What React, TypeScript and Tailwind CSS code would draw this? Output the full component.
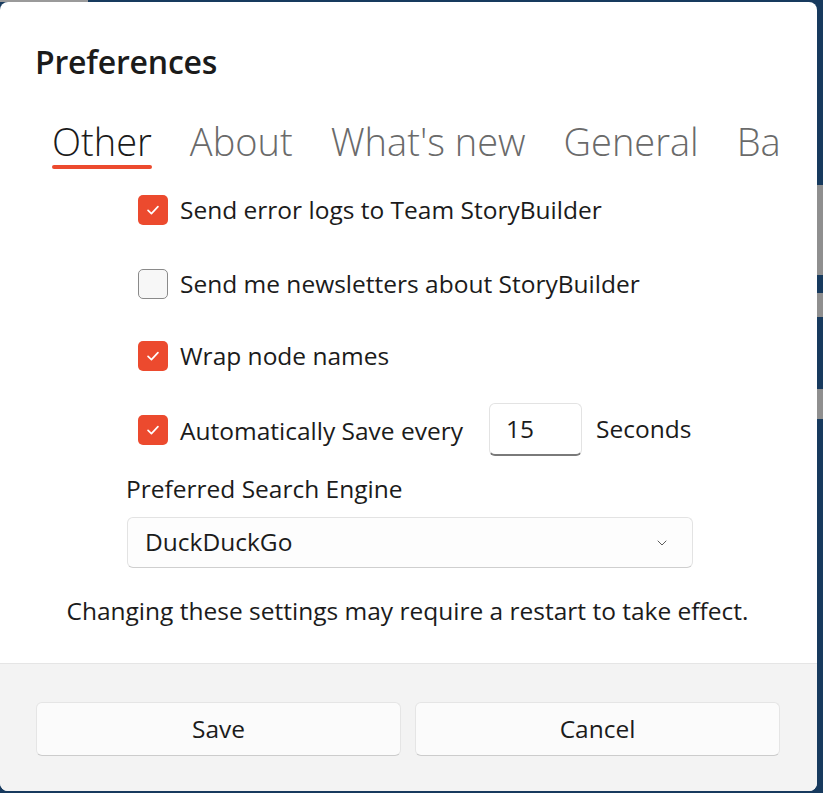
import { ChevronDown } from "lucide-react";

const font = { fontFamily: '"Open Sans", "Noto Sans", sans-serif' };

function Check({ checked }: { checked: boolean }) {
  if (!checked) {
    return <div className="w-[30px] h-[30px] rounded-[5px] border-[1.5px] border-[#8a8a8a] bg-[#f7f7f7] shrink-0" />;
  }
  return (
    <div className="w-[30px] h-[30px] rounded-[5px] bg-[#ec4a2e] flex items-center justify-center shrink-0">
      <svg width="18" height="18" viewBox="0 0 16 16" fill="none">
        <path d="M3.6 8.4 6.6 11.2 12.4 5" stroke="white" strokeWidth="1.5" strokeLinecap="round" strokeLinejoin="round" />
      </svg>
    </div>
  );
}

const tabs = ["Other", "About", "What's new", "General", "Backup"];

export default function App() {
  return (
    <div className="w-[823px] h-[793px] bg-[#173a5e] flex flex-col overflow-hidden" style={font}>
      <div className="h-[2px] flex">
        <div className="w-[88px] bg-[#9a9a9a]" />
      </div>
      <div className="flex flex-1">
        <div className="w-[817px] h-[789px] bg-white rounded-lg flex flex-col overflow-hidden">
          <div className="flex-1 flex flex-col">
            <h1 className="ml-[35px] mt-[40px] text-[32px] leading-[40px] font-semibold text-[#1b1b1b] tracking-[-0.2px]">
              Preferences
            </h1>
            <div className="mt-[31px] ml-[36px] w-[745px] overflow-hidden flex gap-[38px] whitespace-nowrap">
              {tabs.map((t, i) => (
                <div key={t} className="flex flex-col items-center shrink-0 first:ml-[16px]">
                  <span
                    className={`text-[38px] leading-[56px] font-light ${i === 0 ? "text-[#1a1a1a]" : "text-[#6a6a6a]"}`}
                  >
                    {t}
                  </span>
                  <div className={`-mt-[4px] h-[4px] w-full rounded-full ${i === 0 ? "bg-[#ec4a2e]" : "bg-transparent"}`} />
                </div>
              ))}
            </div>

            <div className="ml-[138px] mt-[26px] flex flex-col text-[24.5px] text-[#1b1b1b]">
              <div className="flex items-center gap-[12px] h-[30px]">
                <Check checked />
                <span>Send error logs to Team StoryBuilder</span>
              </div>
              <div className="flex items-center gap-[12px] h-[30px] mt-[44px]">
                <Check checked={false} />
                <span>Send me newsletters about StoryBuilder</span>
              </div>
              <div className="flex items-center gap-[12px] h-[30px] mt-[42px]">
                <Check checked />
                <span>Wrap node names</span>
              </div>
              <div className="flex items-center h-[53px] mt-[32px]">
                <Check checked />
                <span className="ml-[12px] mt-[4px]">Automatically Save every</span>
                <div className="ml-[26px] w-[93px] h-[53px] rounded-[6px] border border-[#e3e3e3] border-b-2 border-b-[#7a7a7a] bg-white flex items-center pl-[16px]">
                  15
                </div>
                <span className="ml-[14px]">Seconds</span>
              </div>
            </div>

            <div className="ml-[126px] mt-[17px] text-[24.5px] leading-[32px] text-[#1b1b1b]">Preferred Search Engine</div>
            <div className="ml-[127px] mt-[12px] w-[566px] h-[51px] rounded-[6px] border border-[#e3e3e3] border-b-[#cfcfcf] bg-[#fdfdfd] flex items-center justify-between pl-[17px] pr-[22px] text-[24.5px] text-[#1b1b1b]">
              <span>DuckDuckGo</span>
              <ChevronDown className="w-[16px] h-[16px] text-[#5c5c5c]" strokeWidth={1.5} />
            </div>
            <div className="mt-[27px] text-center text-[24.5px] leading-[32px] text-[#1b1b1b] pr-[2px]">
              Changing these settings may require a restart to take effect.
            </div>
          </div>

          <div className="h-[128px] shrink-0 bg-[#f3f3f3] border-t border-[#e5e5e5] px-[36px] pt-[38px] flex gap-[14px]">
            <button className="w-[365px] h-[54px] rounded-[6px] bg-[#fbfbfb] border border-[#e5e5e5] border-b-[#cccccc] text-[24.5px] text-[#1b1b1b]">
              Save
            </button>
            <button className="w-[365px] h-[54px] rounded-[6px] bg-[#fbfbfb] border border-[#e5e5e5] border-b-[#cccccc] text-[24.5px] text-[#1b1b1b]">
              Cancel
            </button>
          </div>
        </div>
        <div className="flex-1 flex flex-col">
          <div className="h-[183px]" />
          <div className="h-[90px] bg-[#8f8f8f]" />
          <div className="h-[18px]" />
          <div className="h-[24px] bg-[#8f8f8f]" />
          <div className="h-[72px]" />
          <div className="h-[30px] bg-[#8f8f8f]" />
        </div>
      </div>
    </div>
  );
}
